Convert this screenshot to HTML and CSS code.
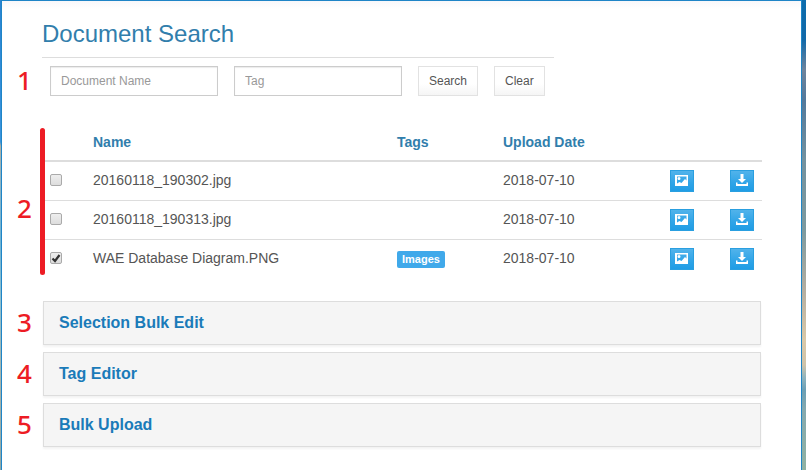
FILE: index.html
```html
<!DOCTYPE html>
<html lang="en">
<head>
<meta charset="utf-8">
<title>Document Search</title>
<link rel="stylesheet" href="styles.css">
</head>
<body>
<svg class="sprites" aria-hidden="true">
  <symbol id="picture" viewBox="0 0 14 12">
    <path fill-rule="evenodd" d="M0 1h13v11H0zM2 2.500V9.500l2.500-1.500 2 1 3.500-4 1.500 1.500V2.500zM4 3a1.500 1.500 0 1 1 0 3a1.500 1.500 0 1 1 0-3z"/>
  </symbol>
  <symbol id="download" viewBox="0 0 14 12">
    <path d="M5.500 0h3v5H11L7 9 3 5h2.500zM1 8.500h1.500V10h9V8.500H13V12H1z"/>
  </symbol>
</svg>
<main class="page">
  <h1 class="title">Document Search</h1>
  <section class="row search">
    <span class="marker">1</span>
    <form class="search-form">
      <input class="field" type="text" placeholder="Document Name" aria-label="Document Name">
      <input class="field" type="text" placeholder="Tag" aria-label="Tag">
      <button class="btn" type="button">Search</button>
      <button class="btn" type="reset">Clear</button>
    </form>
  </section>
  <section class="row results">
    <span class="marker">2</span>
    <table class="documents">
      <colgroup><col class="col-check"><col><col class="col-tags"><col class="col-date"><col class="col-view"><col class="col-download"></colgroup>
      <thead>
        <tr><th></th><th>Name</th><th>Tags</th><th>Upload Date</th><th></th><th></th></tr>
      </thead>
      <tbody>
        <tr>
          <td><input class="check" type="checkbox" aria-label="Select 20160118_190302.jpg"></td>
          <td>20160118_190302.jpg</td><td></td><td>2018-07-10</td>
          <td><button class="icon-btn" type="button" aria-label="View"><svg><use href="#picture"/></svg></button></td>
          <td><button class="icon-btn" type="button" aria-label="Download"><svg><use href="#download"/></svg></button></td>
        </tr>
        <tr>
          <td><input class="check" type="checkbox" aria-label="Select 20160118_190313.jpg"></td>
          <td>20160118_190313.jpg</td><td></td><td>2018-07-10</td>
          <td><button class="icon-btn" type="button" aria-label="View"><svg><use href="#picture"/></svg></button></td>
          <td><button class="icon-btn" type="button" aria-label="Download"><svg><use href="#download"/></svg></button></td>
        </tr>
        <tr>
          <td><input class="check" type="checkbox" checked aria-label="Select WAE Database Diagram.PNG"></td>
          <td>WAE Database Diagram.PNG</td><td><span class="tag">Images</span></td><td>2018-07-10</td>
          <td><button class="icon-btn" type="button" aria-label="View"><svg><use href="#picture"/></svg></button></td>
          <td><button class="icon-btn" type="button" aria-label="Download"><svg><use href="#download"/></svg></button></td>
        </tr>
      </tbody>
    </table>
  </section>
  <div class="panels">
    <section class="row"><span class="marker">3</span><h2 class="panel"><a href="#bulk-edit">Selection Bulk Edit</a></h2></section>
    <section class="row"><span class="marker">4</span><h2 class="panel"><a href="#tag-editor">Tag Editor</a></h2></section>
    <section class="row"><span class="marker">5</span><h2 class="panel"><a href="#bulk-upload">Bulk Upload</a></h2></section>
  </div>
</main>
</body>
</html>
```

FILE: styles.css
```css
* { box-sizing: border-box; }

body {
  margin: 0;
  padding: 0 4px 0 1px;
  font: 14px/20px "Liberation Sans", Arial, sans-serif;
  color: #555;
  background:
    linear-gradient(#2a84d2, #3a94dc 142px, #b0b0a4 146px, #8fb4c4 180px, #6fb3d4 240px, #8fc0d0 300px, #a8b4ac 380px, #8fa8a8 470px) left / 1px 100% no-repeat,
    linear-gradient(#0d6cac 0, #1269a8 40px, #6f849c 70px, #54799b 100px, #74929f 160px, #7d9a9f 230px, #b5aea0 290px, #d9c8a8 340px, #cfc3a9 365px, #8fb3bd 378px, #6d9fb4 390px, #86a9ae 410px, #91b2a2 470px);
}

.sprites { display: none; }

.page {
  min-height: 100vh;
  padding: 20px 39px 0 0;
  border: 1px solid #1f85c7;
  border-bottom: 0;
  background: linear-gradient(#f8f8fb, #fff 8px);
}

.title {
  width: 512px;
  max-width: calc(100% - 40px);
  margin: 0 0 8px 40px;
  padding-bottom: 10px;
  border-bottom: 1px solid #ddd;
  font-size: 24px;
  line-height: 26px;
  font-weight: 400;
  color: #317eac;
}

.row {
  display: grid;
  grid-template-columns: 40px 1fr;
  align-items: center;
}

.marker {
  padding: 0 0 2px 15px;
  font: 500 26px/28px "Noto Sans", sans-serif;
  color: #ed1c24;
}

.search-form { display: flex; gap: 16px; padding-left: 8px; }

.field, .btn {
  height: 30px;
  padding: 0 10px;
  font: 12px/18px "Liberation Sans", Arial, sans-serif;
  border-radius: 0;
}

.field {
  width: 168px;
  color: #555;
  background: #fff;
  border: 1px solid #ccc;
  box-shadow: inset 0 1px 1px rgba(0, 0, 0, .08);
}
.field::placeholder { color: #999; }

.btn {
  color: #555;
  background: linear-gradient(#fff 60%, #f5f5f5);
  border: 1px solid #e2e2e2;
}

.results { position: relative; margin-top: 28px; }
.results .marker { padding-top: 16px; }
.results::before {
  content: "";
  position: absolute;
  left: 38px;
  top: 4px;
  bottom: 3px;
  width: 5px;
  border-radius: 3px;
  background: #ed1c24;
}

.documents {
  width: 100%;
  table-layout: fixed;
  border-collapse: separate;
  border-spacing: 0;
}
.col-check { width: 43px; }
.col-tags { width: 106px; }
.col-date { width: 167px; }
.col-view { width: 60px; }
.col-download { width: 40px; }

th, td { padding: 8px; text-align: left; }
th { height: 38px; border-bottom: 2px solid #ddd; color: #317eac; }
td { height: 39px; border-top: 1px solid #ddd; line-height: 20px; padding: 8px 8px 10px; }
tbody tr:first-child td { height: 38px; border-top: 0; }
td:nth-child(n+5) { padding: 8px; }

.check {
  appearance: none;
  display: block;
  width: 12px;
  height: 12px;
  margin: 0;
  border: 1px solid #aaa;
  border-radius: 2px;
  background: linear-gradient(#eee, #ddd);
}
.check:checked {
  background: url("data:image/svg+xml,%3Csvg xmlns='http://www.w3.org/2000/svg' viewBox='0 0 10 10'%3E%3Cpath d='M1.500 5.500L4 8L8.500 2' fill='none' stroke='%23333' stroke-width='2.200'/%3E%3C/svg%3E"), linear-gradient(#eee, #ddd);
}

.tag {
  display: block;
  width: max-content;
  margin-top: 2px;
  padding: 0 5px;
  font-size: 11px;
  line-height: 17px;
  font-weight: 700;
  color: #fff;
  background: #40a9ea;
  border-radius: 2px;
}

.icon-btn {
  display: block;
  width: 24px;
  height: 22px;
  padding: 4px 0 0 5px;
  border: 0;
  color: #fff;
  background: linear-gradient(#54b4eb, #2fa4e7 60%, #1d9ce5);
  box-shadow: inset 0 0 0 1px #2a9fe0, inset 0 -1px #178acc;
}
.icon-btn svg {
  display: block;
  width: 14px;
  height: 12px;
  margin-bottom: 6px;
  fill: currentColor;
}

.panels { display: grid; gap: 7px; margin-top: 23px; }
.panel {
  margin: 0 1px;
  padding: 11px 15px;
  border: 1px solid #ddd;
  background: #f5f5f5;
  box-shadow: 0 2px 2px rgba(0, 0, 0, .05);
  font-size: 16px;
  line-height: 20px;
}
.panel a { color: #1a7bb9; text-decoration: none; }
```
